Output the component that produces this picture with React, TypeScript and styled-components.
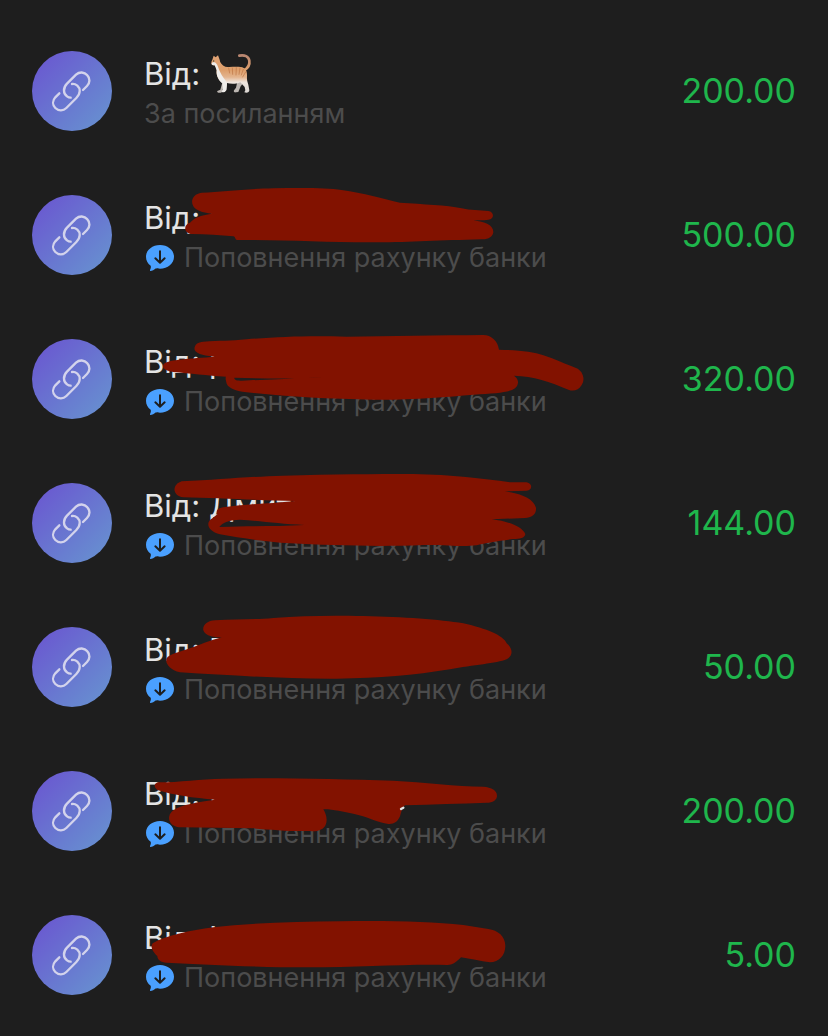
import React from "react";
import styled, { createGlobalStyle } from "styled-components";

const GlobalStyle = createGlobalStyle`
  * { box-sizing: border-box; }
  body {
    margin: 0;
    background: #1e1e1e;
    font-family: Inter, "Liberation Sans", sans-serif;
  }
`;

const List = styled.ul`
  list-style: none;
  margin: 0;
  padding: 19px 32px 9px;
`;

const Row = styled.li`
  position: relative;
  display: flex;
  align-items: center;
  gap: 32px;
  height: 144px;
`;

const Avatar = styled.div`
  display: flex;
  flex: none;
  width: 80px;
  height: 80px;
  border-radius: 50%;
  background: linear-gradient(135deg, #6a58d0 8%, #6790d0 92%);
`;

const Details = styled.div`
  flex: 1;
  min-width: 0;
  padding-top: 6px;
  white-space: nowrap;
`;

const Sender = styled.div`
  display: flex;
  align-items: center;
  gap: 10px;
  height: 40px;
  font-size: 31px;
  line-height: 40px;
  color: #e4e4e4;
`;

const Note = styled.div`
  display: flex;
  align-items: center;
  gap: 8px;
  height: 40px;
  font-size: 27px;
  line-height: 40px;
  color: #4c4c4c;
`;

const Amount = styled.div`
  flex: none;
  font-size: 34px;
  line-height: 44px;
  color: #1fb64c;
`;

const Scribble = styled.svg`
  position: absolute;
  left: 108px;
  top: 0;
  width: 460px;
  height: 144px;
  pointer-events: none;
`;

function LinkIcon() {
  return (
    <svg width="80" height="80" viewBox="0 0 240 240" fill="none" stroke="#d3d3ec" strokeWidth="7" strokeLinecap="round" aria-hidden="true">
      <path d="M153 117L165 105C174 96 175 82 166 73C157 62 142 62 132 71L105 98C92 111 94 129 105 136C109 139 112 140 116 140" />
      <path d="M82 127L70 139C61 149 61 162 70 171C80 181 94 180 103 171L133 141C147 127 145 112 136 104C131 100 126 98 120 99" />
    </svg>
  );
}

function TopUpIcon() {
  return (
    <svg width="32" height="28" viewBox="0 0 96 84" aria-hidden="true">
      <path d="M48 3C71 3 90 18 90 38C90 58 71 74 48 74C42 74 39 74 36 73C31 78 24 81 19 81C17 80 18 78 19 76C21 71 21 68 20 65C11 58 6 49 6 38C6 18 25 3 48 3Z" fill="#4aa0ff" />
      <path d="M48 22V55M34 43L48 56L62 43" fill="none" stroke="#1e1e1e" strokeWidth="6" strokeLinecap="round" strokeLinejoin="round" />
    </svg>
  );
}

function Cat() {
  return (
    <svg width="42" height="42" viewBox="0 0 126 126" role="img" aria-label="Кіт">
      <defs>
        <linearGradient id="fur" x1="0" y1="0" x2="0" y2="1">
          <stop offset="0" stopColor="#e0a274" />
          <stop offset="0.4" stopColor="#dd9f6c" />
          <stop offset="0.58" stopColor="#e3b48e" />
          <stop offset="0.72" stopColor="#efe6de" />
          <stop offset="1" stopColor="#d9d5d1" />
        </linearGradient>
        <linearGradient id="tail" x1="0" y1="0" x2="0" y2="1">
          <stop offset="0" stopColor="#b98670" />
          <stop offset="1" stopColor="#dd9f6c" />
        </linearGradient>
      </defs>
      <path d="M102 52C113 46 120 36 118 23C116 10 104 5 88 8" fill="none" stroke="url(#tail)" strokeWidth="8" strokeLinecap="round" />
      <path d="M82 86L78 104L72 112C70 116 73 119 78 118L85 117L92 100L102 88Z" fill="#bdb7b2" />
      <path d="M36 92L31 110L22 114C20 118 24 120 34 119L44 96Z" fill="#bdb7b2" />
      <path d="M7 20L11 8L17 13L24 7L29 20C30 29 36 36 46 41C60 43 76 40 92 42C106 44 112 54 111 68C110 78 112 86 115 95L118 112C118 119 110 121 103 118L106 112L104 102L91 88C76 94 61 93 51 90L49 112C46 118 38 120 34 116L39 109L37 91C26 82 18 68 20 52C19 43 17 40 14 37C4 37 1 31 7 20Z" fill="url(#fur)" />
      <path d="M6 29C10 28 15 27 18 31C24 36 24 45 30 56C36 70 45 78 51 90L49 110L44 117L35 117L39 109L37 91C26 82 18 68 20 52L14 37C6 37 3 34 6 29Z" fill="#efedea" />
      <path d="M56 45L59 60M67 45L68 64M79 44L78 66M90 45L87 64M100 49L94 66M107 57L98 72" fill="none" stroke="#bd7444" strokeWidth="2" strokeLinecap="round" />
      <circle cx="11" cy="24" r="2" fill="#39412e" />
    </svg>
  );
}

type Transfer = {
  name?: string;
  cat?: boolean;
  note: string;
  topUp?: boolean;
  amount: string;
  cover?: { shift: number; d: string; tail?: string };
};

const TOP_UP = "Поповнення рахунку банки";

const transfers: Transfer[] = [
  { cat: true, note: "За посиланням", amount: "200.00" },
  {
    name: "І", note: TOP_UP, topUp: true, amount: "500.00",
    cover: { shift: 51, d: "M185 38C250 36 310 27 400 25C480 24 560 23 605 30C670 39 730 57 780 68C850 73 920 75 965 85C990 91 1020 91 1045 93C1064 96 1063 117 1045 119C1030 122 1010 120 1000 121C1035 126 1060 135 1060 156C1059 170 1045 179 1025 178C890 181 800 188 690 187C550 187 430 178 290 180C285 178 287 171 280 169C240 165 200 163 155 162C130 159 130 133 150 128C164 112 180 107 215 101C185 98 168 91 160 79C150 62 160 41 185 38Z" },
  },
  {
    name: "р", note: TOP_UP, topUp: true, amount: "320.00",
    cover: { shift: 54, d: "M190 50C240 46 270 49 320 43C420 35 500 32 620 35C750 33 900 31 1030 30C1054 30 1074 49 1077 74C1135 75 1180 80 1210 91C1245 102 1280 119 1308 129C1330 138 1336 164 1325 180C1316 196 1300 200 1285 194C1230 170 1180 154 1122 152C1137 162 1138 178 1125 190C1110 202 1070 205 1000 209C920 216 820 225 700 224C560 222 430 214 320 202C285 197 260 190 258 168C256 160 257 156 258 155C200 152 150 145 100 141C75 137 63 128 72 116C90 103 145 101 228 95C200 94 170 88 164 75C161 61 172 51 190 50ZM283 158C282 168 300 168 330 166C410 163 480 161 556 156C460 163 380 161 283 158Z" },
  },
  {
    name: "Дмитр", note: TOP_UP, topUp: true, amount: "144.00",
    cover: { shift: 42, d: "M125 49C240 44 320 35 430 32C580 28 700 27 820 27C940 29 1030 42 1115 52L1160 52C1178 55 1178 76 1160 77L1095 79C1150 87 1180 103 1188 128C1190 148 1175 159 1155 159L1055 163C1105 169 1145 184 1156 207C1154 220 1140 222 1120 222C1080 227 1035 234 1010 241C960 247 930 239 850 240C720 246 570 241 450 235C370 229 300 219 240 208C203 199 195 172 217 160L232 148C222 129 250 126 275 124C330 117 390 116 465 108C360 106 230 99 130 97C95 92 96 58 125 49ZM238 186C340 182 410 185 493 180C420 177 360 168 300 164C270 164 247 173 238 186Z" },
  },
  {
    name: "Г", note: TOP_UP, topUp: true, amount: "50.00",
    cover: { shift: 30, d: "M225 46C290 42 350 44 400 39C490 32 570 31 670 33C790 36 900 43 970 55C1040 71 1090 91 1100 115C1118 130 1121 151 1100 163C1070 175 1000 180 930 193C820 211 720 220 590 221C430 222 270 211 120 202C88 194 74 173 80 160C87 147 120 141 150 130C180 119 210 106 245 97C215 98 195 91 190 76C187 61 202 47 225 46Z" },
  },
  {
    name: "І", note: TOP_UP, topUp: true, amount: "200.00",
    cover: { shift: 93, tail: "M783 117L790 113", d: "M55 37C120 37 180 27 250 26C410 22 600 28 760 32C850 37 950 49 1030 50C1055 52 1071 61 1071 77C1071 90 1058 98 1040 98C960 101 880 103 795 106C787 112 785 122 780 139C773 155 763 163 745 162C715 158 680 139 640 131C610 125 575 117 550 118C559 132 563 151 557 164C552 179 530 186 510 183C450 184 390 179 340 175L125 172C98 172 83 155 88 138C94 113 137 101 225 89C160 83 100 76 52 60C40 51 42 40 55 37Z" },
  },
  {
    name: "І", note: TOP_UP, topUp: true, amount: "5.00",
    cover: { shift: 81, d: "M38 100C80 75 150 62 220 52C330 38 470 36 600 34C740 31 870 35 970 45L1045 57C1074 61 1096 79 1096 108C1096 136 1077 156 1050 157C1022 154 990 146 963 142C951 154 940 166 920 165C800 162 660 172 500 172C350 172 200 163 80 158C62 157 52 149 52 138C43 130 28 112 38 100Z" },
  },
];

function TransferRow({ item }: { item: Transfer }) {
  return (
    <Row>
      <Avatar><LinkIcon /></Avatar>
      <Details>
        <Sender>
          <span>Від:{item.name ? " " + item.name : ""}</span>
          {item.cat && <Cat />}
        </Sender>
        <Note>
          {item.topUp && <TopUpIcon />}
          <span>{item.note}</span>
        </Note>
      </Details>
      <Amount>{item.amount}</Amount>
      {item.cover && (
        <Scribble viewBox="0 0 1380 432" aria-hidden="true">
          <g transform={`translate(0 ${item.cover.shift})`}>
            <path d={item.cover.d} fill="#821200" fillRule="evenodd" />
            {item.cover.tail && <path d={item.cover.tail} stroke="#e4e4e4" strokeWidth="7" strokeLinecap="round" />}
          </g>
        </Scribble>
      )}
    </Row>
  );
}

export default function App() {
  return (
    <>
      <GlobalStyle />
      <List>
        {transfers.map((item, i) => <TransferRow key={i} item={item} />)}
      </List>
    </>
  );
}
